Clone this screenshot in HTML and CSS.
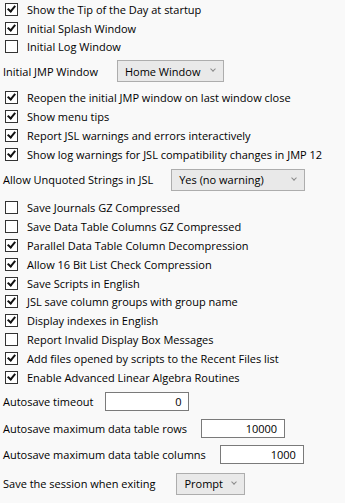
FILE: index.html
```html
<!DOCTYPE html>
<html lang="en">
<head>
    <meta charset="UTF-8">
    <title>Preferences</title>
    <link rel="stylesheet" href="styles.css">
</head>
<body>
    <div class="prefs">
        <div class="group first">
            <div class="check"><span class="box on"></span>Show the Tip of the Day at startup</div>
            <div class="check"><span class="box on"></span>Initial Splash Window</div>
            <div class="check"><span class="box"></span>Initial Log Window</div>
        </div>

        <div class="field jmpwin">
            <span class="label">Initial JMP Window</span>
            <span class="select home">Home Window<span class="chev"></span></span>
        </div>

        <div class="group">
            <div class="check"><span class="box on"></span>Reopen the initial JMP window on last window close</div>
            <div class="check"><span class="box on"></span>Show menu tips</div>
            <div class="check"><span class="box on"></span>Report JSL warnings and errors interactively</div>
            <div class="check"><span class="box on"></span>Show log warnings for JSL compatibility changes in JMP 12</div>
        </div>

        <div class="field unquoted">
            <span class="label">Allow Unquoted Strings in JSL</span>
            <span class="select yes">Yes (no warning)<span class="chev"></span></span>
        </div>

        <div class="group third">
            <div class="check"><span class="box"></span>Save Journals GZ Compressed</div>
            <div class="check"><span class="box"></span>Save Data Table Columns GZ Compressed</div>
            <div class="check"><span class="box on"></span>Parallel Data Table Column Decompression</div>
            <div class="check"><span class="box on"></span>Allow 16 Bit List Check Compression</div>
            <div class="check"><span class="box on"></span>Save Scripts in English</div>
            <div class="check"><span class="box on"></span>JSL save column groups with group name</div>
            <div class="check"><span class="box on"></span>Display indexes in English</div>
            <div class="check"><span class="box"></span>Report Invalid Display Box Messages</div>
            <div class="check"><span class="box on"></span>Add files opened by scripts to the Recent Files list</div>
            <div class="check"><span class="box on"></span>Enable Advanced Linear Algebra Routines</div>
        </div>

        <div class="field timeout">
            <span class="label">Autosave timeout</span>
            <span class="input">0</span>
        </div>
        <div class="field rows">
            <span class="label">Autosave maximum data table rows</span>
            <span class="input">10000</span>
        </div>
        <div class="field cols">
            <span class="label">Autosave maximum data table columns</span>
            <span class="input">1000</span>
        </div>
        <div class="field session">
            <span class="label">Save the session when exiting</span>
            <span class="select prompt">Prompt<span class="chev"></span></span>
        </div>
    </div>
</body>
</html>
```

FILE: styles.css
```css
html, body {
    margin: 0;
    background: #f9f9f9;
    font-family: "Open Sans", "Noto Sans", sans-serif;
    font-size: 11px;
    color: #000;
}

.prefs {
    display: flex;
    flex-flow: column;
    padding: 0 0 0 3px;
}

.group {
    display: flex;
    flex-flow: column;
    margin-top: 6px;
}

.group.first {
    margin-top: 0;
}

.group.third {
    margin-top: 8px;
}

.check {
    display: flex;
    align-items: center;
    height: 18.8px;
    white-space: nowrap;
}

.box {
    flex: none;
    width: 11px;
    height: 11px;
    border: 1px solid #333;
    background: #fff;
    margin: 0 9px 0 2px;
    position: relative;
}

.box.on::after {
    content: "";
    position: absolute;
    left: 3px;
    top: 0px;
    width: 3px;
    height: 6px;
    border: solid #111;
    border-width: 0 2px 2px 0;
    transform: rotate(40deg);
}

.field {
    display: flex;
    align-items: center;
    white-space: nowrap;
}

.field .label {
    flex: none;
}

.select {
    display: flex;
    align-items: center;
    box-sizing: border-box;
    height: 22px;
    padding: 0 0 0 7px;
    background: #e9e9e9;
    border: 1px solid #adadad;
    position: relative;
}

.chev {
    position: absolute;
    right: 8px;
    top: 6px;
    width: 3px;
    height: 3px;
    border: solid #8a8a8a;
    border-width: 0 1px 1px 0;
    transform: rotate(45deg);
}

.input {
    box-sizing: border-box;
    width: 84px;
    height: 19px;
    border: 1px solid #7a7a7a;
    background: #fff;
    text-align: right;
    padding: 0 7px;
    line-height: 17px;
}

.jmpwin { margin-top: 4px; }
.jmpwin .select { margin-left: 19px; width: 107px; }

.unquoted { margin-top: 5px; }
.unquoted .select { margin-left: 18px; width: 134px; }

.timeout { margin-top: 5px; }
.timeout .input { margin-left: 12px; }

.rows { margin-top: 8px; }
.rows .input { margin-left: 14px; }

.cols { margin-top: 7px; }
.cols .input { margin-left: 14px; }

.session { margin-top: 9px; }
.session .select { margin-left: 21px; width: 69px; }
```
